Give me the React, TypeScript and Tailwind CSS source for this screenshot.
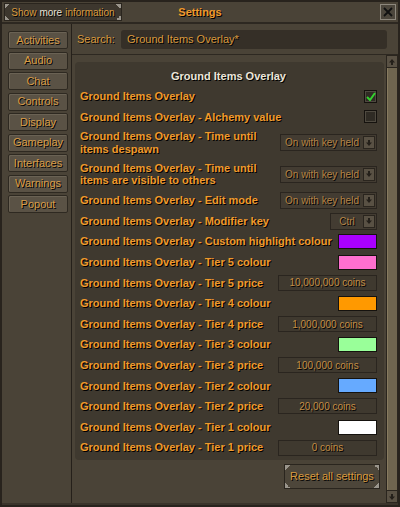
import React from "react";

type Control =
  | { kind: "check"; on: boolean }
  | { kind: "select"; value: string; width: string }
  | { kind: "colour"; bg: string }
  | { kind: "price"; value: string };

type Row = { label: React.ReactNode; tall?: boolean; control: Control };

const P = "Ground Items Overlay";

const rows: Row[] = [
  { label: P, control: { kind: "check", on: true } },
  { label: `${P} - Alchemy value`, control: { kind: "check", on: false } },
  {
    label: (
      <>
        {P} - Time until
        <br />
        items despawn
      </>
    ),
    tall: true,
    control: { kind: "select", value: "On with key held", width: "w-[97px]" },
  },
  {
    label: (
      <>
        {P} - Time until
        <br />
        items are visible to others
      </>
    ),
    tall: true,
    control: { kind: "select", value: "On with key held", width: "w-[97px]" },
  },
  { label: `${P} - Edit mode`, control: { kind: "select", value: "On with key held", width: "w-[97px]" } },
  { label: `${P} - Modifier key`, control: { kind: "select", value: "Ctrl", width: "w-[47px]" } },
  { label: `${P} - Custom highlight colour`, control: { kind: "colour", bg: "bg-[#aa00ff]" } },
  { label: `${P} - Tier 5 colour`, control: { kind: "colour", bg: "bg-[#ff6fcf]" } },
  { label: `${P} - Tier 5 price`, control: { kind: "price", value: "10,000,000 coins" } },
  { label: `${P} - Tier 4 colour`, control: { kind: "colour", bg: "bg-[#ff9900]" } },
  { label: `${P} - Tier 4 price`, control: { kind: "price", value: "1,000,000 coins" } },
  { label: `${P} - Tier 3 colour`, control: { kind: "colour", bg: "bg-[#99ff99]" } },
  { label: `${P} - Tier 3 price`, control: { kind: "price", value: "100,000 coins" } },
  { label: `${P} - Tier 2 colour`, control: { kind: "colour", bg: "bg-[#66aaff]" } },
  { label: `${P} - Tier 2 price`, control: { kind: "price", value: "20,000 coins" } },
  { label: `${P} - Tier 1 colour`, control: { kind: "colour", bg: "bg-[#ffffff]" } },
  { label: `${P} - Tier 1 price`, control: { kind: "price", value: "0 coins" } },
];

const tabs = ["Activities", "Audio", "Chat", "Controls", "Display", "Gameplay", "Interfaces", "Warnings", "Popout"];

const shadow = "[text-shadow:1px_1px_0_#000]";

function Corners() {
  return (
    <>
      <span className="absolute left-0 top-0 h-[5px] w-[5px] bg-[linear-gradient(135deg,#9a958c_50%,transparent_50%)]" />
      <span className="absolute right-0 top-0 h-[5px] w-[5px] bg-[linear-gradient(225deg,#9a958c_50%,transparent_50%)]" />
      <span className="absolute bottom-0 left-0 h-[5px] w-[5px] bg-[linear-gradient(45deg,#9a958c_50%,transparent_50%)]" />
      <span className="absolute bottom-0 right-0 h-[5px] w-[5px] bg-[linear-gradient(315deg,#9a958c_50%,transparent_50%)]" />
    </>
  );
}

function ArrowBox({ up }: { up?: boolean }) {
  return (
    <div className="flex h-[13px] w-[12px] items-center justify-center border border-[#2a251e] bg-[#595144]">
      <svg width="8" height="8" viewBox="0 0 8 8" className={up ? "rotate-180" : ""}>
        <path d="M4 7 L1 3.5 H3 V1 H5 V3.5 H7 Z" fill="#24201a" />
      </svg>
    </div>
  );
}

function ControlView({ c }: { c: Control }) {
  if (c.kind === "check")
    return (
      <div className="flex h-[13px] w-[13px] items-center justify-center border border-[#15120e] bg-[#2f2b24] shadow-[inset_0_0_0_1px_#4f4a40]">
        {c.on && (
          <svg width="10" height="9" viewBox="0 0 10 9">
            <path d="M1 5 L4 8 L9 1" stroke="#34d12f" strokeWidth="2" fill="none" />
          </svg>
        )}
      </div>
    );
  if (c.kind === "colour") return <div className={`h-[15px] w-[39px] border border-[#15120e] ${c.bg}`} />;
  if (c.kind === "price")
    return (
      <div className={`flex h-[16px] w-[99px] items-center justify-center border border-[#2a251f] bg-[#3f392f] text-[10px] text-[#c38d45] ${shadow}`}>
        {c.value}
      </div>
    );
  return (
    <div className={`flex h-[17px] ${c.width} items-center border border-[#2a251f] bg-[#433c32] pr-[1px]`}>
      <span className={`flex-1 text-center text-[10px] text-[#b68447] ${shadow}`}>{c.value}</span>
      <ArrowBox />
    </div>
  );
}

export default function App() {
  return (
    <div className="flex h-[507px] w-[400px] flex-col border-2 border-[#28231d] bg-[#4a4337] font-['Liberation_Sans',sans-serif]">
      {/* title bar */}
      <div className="grid h-[22px] shrink-0 grid-cols-[1fr_auto_1fr] items-center border-b-2 border-[#2d2821] px-[2px]">
        <div className="relative flex h-[18px] w-[118px] items-center justify-center border border-[#2a251e] bg-[#3d372e] text-[10px]">
          <Corners />
          <span className={`text-[#d99a3f] ${shadow}`}>Show</span>
          <span className={`mx-[3px] text-[#e6e1d6] ${shadow}`}>more</span>
          <span className={`text-[#d99a3f] ${shadow}`}>information</span>
        </div>
        <div className={`text-[11px] font-bold text-[#f09a2c] ${shadow}`}>Settings</div>
        <div className="flex justify-end">
          <div className="flex h-[16px] w-[16px] items-center justify-center border border-[#8d877c] bg-[#4c463c]">
            <svg width="10" height="10" viewBox="0 0 10 10">
              <path d="M1 1 L9 9 M9 1 L1 9" stroke="#111" strokeWidth="1.8" />
            </svg>
          </div>
        </div>
      </div>

      <div className="flex min-h-0 flex-1">
        {/* tab list */}
        <div className="flex w-[70px] shrink-0 flex-col gap-[2.5px] border-r border-[#25201a] pl-[6px] pt-[7px]">
          {tabs.map((t) => (
            <div
              key={t}
              className={`flex h-[18px] w-[60px] items-center justify-center rounded-[2px] border border-[#2e2921] bg-[#5a5245] text-[11px] text-[#d89c48] shadow-[inset_1px_1px_0_#6a6254] ${shadow}`}
            >
              {t}
            </div>
          ))}
        </div>

        <div className="flex min-w-0 flex-1 flex-col">
          {/* search */}
          <div className="flex h-[31px] shrink-0 items-center gap-[6px] border-b border-[#2d2821] pl-[5px] pr-[11px]">
            <span className={`text-[11px] text-[#d99a3f] ${shadow}`}>Search:</span>
            <div className={`flex h-[19px] flex-1 items-center rounded-[3px] bg-[#352f27] pl-[6px] text-[11px] text-[#d99a3f] ${shadow}`}>
              Ground Items Overlay*
            </div>
          </div>

          <div className="flex min-h-0 flex-1">
            <div className="flex min-w-0 flex-1 flex-col pl-[3px] pr-[2px] pt-[7px]">
              <div className="flex flex-col rounded-[4px] bg-[#3f392f] pb-[2px] pl-[5px] pr-[7px] pt-[4px]">
                <div className={`flex h-[20px] items-center justify-center text-[11px] font-bold text-[#ece6da] ${shadow}`}>
                  Ground Items Overlay
                </div>
                {rows.map((r, i) => (
                  <div key={i} className={`flex items-center justify-between ${r.tall ? "h-[31.5px]" : "h-[20.6px]"}`}>
                    <div className={`text-[11px] font-bold leading-[12.5px] text-[#f09a2c] ${shadow}`}>{r.label}</div>
                    <ControlView c={r.control} />
                  </div>
                ))}
              </div>
              <div className="flex justify-end pr-[4px] pt-[4px]">
                <div className={`relative flex h-[25px] w-[96px] items-center justify-center border border-[#2a251e] bg-[#4d463a] text-[11px] text-[#d99a3f] ${shadow}`}>
                  <Corners />
                  Reset all settings
                </div>
              </div>
            </div>

            {/* scrollbar */}
            <div className="flex w-[12px] shrink-0 flex-col">
              <ArrowBox up />
              <div className="flex-1 border-x border-[#2a251e] bg-[#6f654f] shadow-[inset_1px_0_0_#877b60]" />
              <ArrowBox />
            </div>
          </div>
        </div>
      </div>
      <div className="h-[2px] shrink-0 bg-[#3a342b]" />
    </div>
  );
}
